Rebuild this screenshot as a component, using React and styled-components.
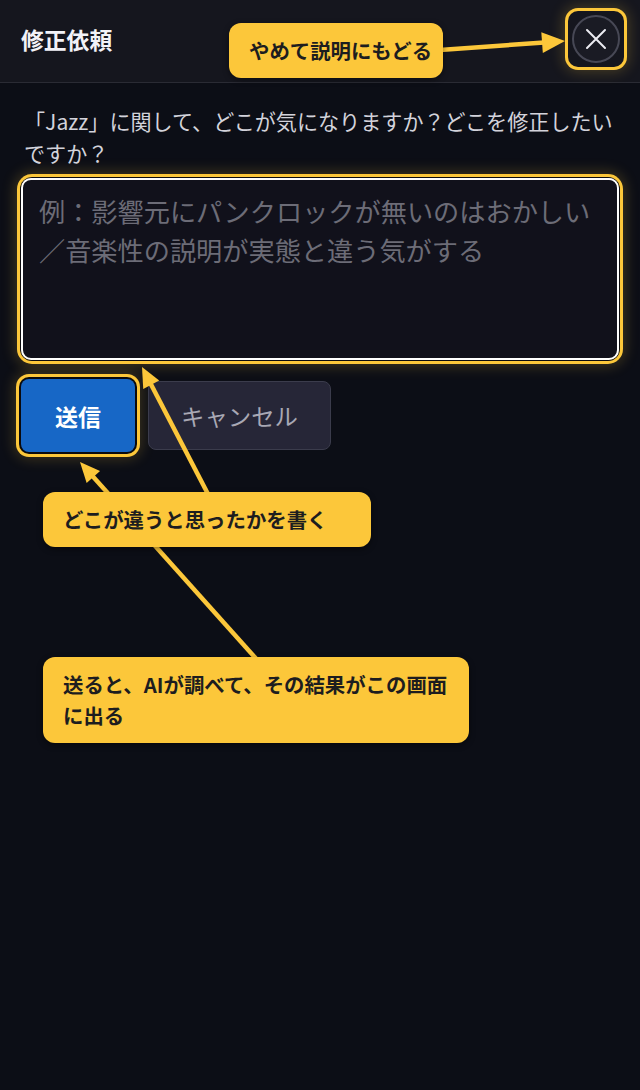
import React from "react";
import styled, { createGlobalStyle } from "styled-components";

const GlobalStyle = createGlobalStyle`
  html, body { margin: 0; padding: 0; background: #0c0e16; }
  body { font-family: "Noto Sans CJK JP", "Noto Sans", sans-serif; }
  * { box-sizing: border-box; }
`;

const YELLOW = "#fcc73a";

const Page = styled.div`
  position: relative;
  width: 640px;
  min-height: 1090px;
  background: #0c0e16;
  overflow: hidden;
`;

const Header = styled.header`
  height: 83px;
  display: flex;
  align-items: center;
  justify-content: space-between;
  padding: 0 16px 4px 21px;
  background: #15161e;
  border-bottom: 1px solid #2a2b34;
`;

const Title = styled.h1`
  margin: 0;
  font-size: 22.8px;
  font-weight: 700;
  color: #f2f2f7;
  letter-spacing: 0;
`;

const Highlight = styled.div`
  border-radius: ${(p) => p.$radius || 10}px;
  box-shadow: 0 0 0 ${(p) => p.$gap || 0}px #0c0c10,
    0 0 0 ${(p) => (p.$gap || 0) + 3}px ${YELLOW},
    0 0 14px ${(p) => (p.$gap || 0) + 5}px rgba(252, 199, 58, 0.22);
`;

const CloseFrame = styled(Highlight)`
  width: 56px;
  height: 56px;
  display: flex;
  align-items: center;
  justify-content: center;
  background: #15161e;
`;

const CloseButton = styled.button`
  width: 48px;
  height: 48px;
  border-radius: 50%;
  border: 2px solid #474855;
  background: #1a1b24;
  display: flex;
  align-items: center;
  justify-content: center;
  padding: 0;
  cursor: pointer;
`;

const Main = styled.main`
  padding: 22px 21px 0 21px;
`;

const Question = styled.p`
  margin: 0 0 9px 3px;
  font-size: 21.1px;
  line-height: 32px;
  color: #d3d3db;
`;

const TextFrame = styled(Highlight)`
  border-radius: 11px;
`;

const TextArea = styled.textarea`
  display: block;
  width: 100%;
  height: 182px;
  resize: none;
  border: 2px solid #ffffff;
  border-radius: 10px;
  background: #11111b;
  padding: 12px 16px;
  font-family: "Noto Sans CJK JP", "Noto Sans", sans-serif;
  font-size: 26.2px;
  line-height: 39px;
  color: #e0e0e8;
  outline: none;
  &::placeholder { color: #6c6c77; }
`;

const ButtonRow = styled.div`
  display: flex;
  align-items: center;
  gap: 13px;
  margin-top: 19px;
`;

const SubmitButton = styled.button`
  width: 114px;
  height: 73px;
  border: none;
  border-radius: 8px;
  background: #1767c6;
  color: #ffffff;
  font-family: "Noto Sans CJK JP", "Noto Sans", sans-serif;
  font-size: 23px;
  font-weight: 700;
  cursor: pointer;
  box-shadow: 0 0 0 2px #0a0a0d, 0 0 0 5px ${YELLOW},
    0 0 14px 7px rgba(252, 199, 58, 0.2);
`;

const CancelButton = styled.button`
  width: 183px;
  height: 69px;
  border: 1px solid #3b3c4c;
  border-radius: 8px;
  background: #262637;
  color: #a8a8b4;
  font-family: "Noto Sans CJK JP", "Noto Sans", sans-serif;
  font-size: 23.4px;
  font-weight: 400;
  cursor: pointer;
`;

const ArrowLayer = styled.svg`
  position: absolute;
  left: 0;
  top: 0;
  width: 640px;
  height: 1090px;
  pointer-events: none;
`;

const Callout = styled.div`
  position: absolute;
  left: ${(p) => p.$x}px;
  top: ${(p) => p.$y}px;
  width: ${(p) => p.$w}px;
  padding: 12px 8px 12px 20px;
  background: ${YELLOW};
  color: #1d1d1f;
  border-radius: 12px;
  font-size: 20.4px;
  font-weight: 700;
  line-height: 31px;
  white-space: ${(p) => (p.$nowrap ? "nowrap" : "normal")};
  box-shadow: 0 2px 6px rgba(0, 0, 0, 0.45);
`;

function Arrow({ from, to, len = 22, half = 10 }) {
  const [x1, y1] = from;
  const [x2, y2] = to;
  const dx = x2 - x1;
  const dy = y2 - y1;
  const d = Math.hypot(dx, dy);
  const ux = dx / d;
  const uy = dy / d;
  const bx = x2 - ux * len;
  const by = y2 - uy * len;
  const nx = -uy;
  const ny = ux;
  const pts = `${x2},${y2} ${bx + nx * half},${by + ny * half} ${bx - nx * half},${by - ny * half}`;
  return (
    <g>
      <line x1={x1} y1={y1} x2={bx + ux * 2} y2={by + uy * 2} stroke={YELLOW} strokeWidth="4.5" />
      <polygon points={pts} fill={YELLOW} />
    </g>
  );
}

export default function App() {
  return (
    <>
      <GlobalStyle />
      <Page>
        <Header>
          <Title>修正依頼</Title>
          <CloseFrame $radius={10}>
            <CloseButton aria-label="閉じる">
              <svg width="22" height="22" viewBox="0 0 22 22">
                <path d="M2 2 L20 20 M20 2 L2 20" stroke="#ececf2" strokeWidth="2" strokeLinecap="round" fill="none" />
              </svg>
            </CloseButton>
          </CloseFrame>
        </Header>
        <Main>
          <Question>「Jazz」に関して、どこが気になりますか？どこを修正したいですか？</Question>
          <TextFrame $gap={1}>
            <TextArea placeholder="例：影響元にパンクロックが無いのはおかしい／音楽性の説明が実態と違う気がする" />
          </TextFrame>
          <ButtonRow>
            <SubmitButton>送信</SubmitButton>
            <CancelButton>キャンセル</CancelButton>
          </ButtonRow>
        </Main>

        <ArrowLayer viewBox="0 0 640 1090">
          <Arrow from={[440, 50]} to={[565, 41]} len={23} half={10.5} />
          <Arrow from={[209, 496]} to={[142, 367]} len={20} half={9} />
          <Arrow from={[259, 662]} to={[80, 462]} len={20} half={9} />
        </ArrowLayer>

        <Callout $x={229} $y={23} $w={214} $nowrap>やめて説明にもどる</Callout>
        <Callout $x={43} $y={492} $w={328}>どこが違うと思ったかを書く</Callout>
        <Callout $x={43} $y={657} $w={426}>送ると、AIが調べて、その結果がこの画面に出る</Callout>
      </Page>
    </>
  );
}
